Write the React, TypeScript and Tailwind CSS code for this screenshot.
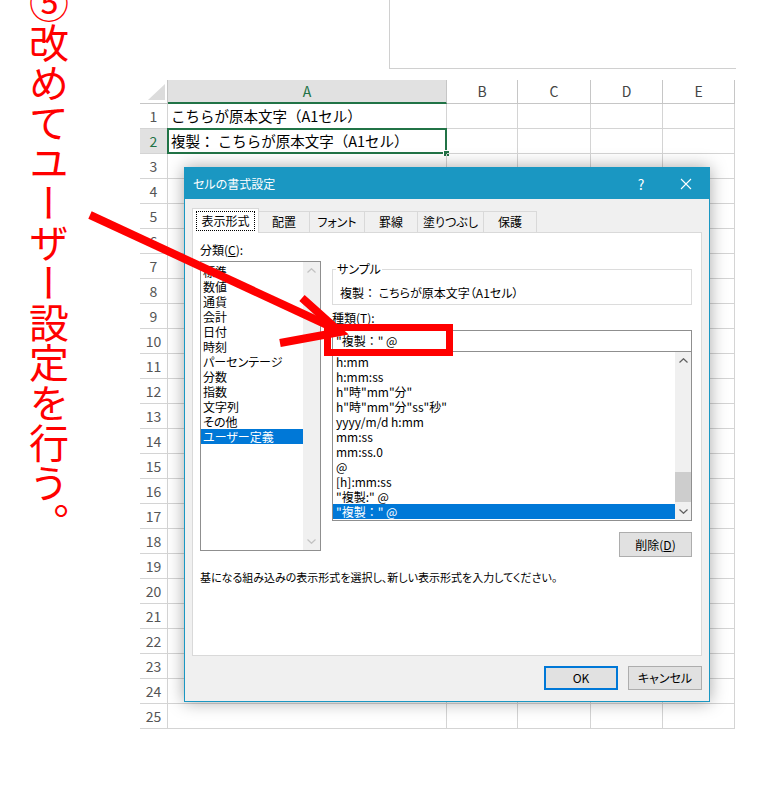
import React from 'react';

const jp = "font-['Noto_Sans_CJK_JP',sans-serif]";

const cols = [
  { label: 'A', w: 'w-[279px]' },
  { label: 'B', w: 'w-[71px]' },
  { label: 'C', w: 'w-[73px]' },
  { label: 'D', w: 'w-[72px]' },
  { label: 'E', w: 'w-[72px]' },
];

const categories = [
  '標準',
  '数値',
  '通貨',
  '会計',
  '日付',
  '時刻',
  'パーセンテージ',
  '分数',
  '指数',
  '文字列',
  'その他',
  'ユーザー定義',
];

const formats = [
  'h:mm',
  'h:mm:ss',
  'h"時"mm"分"',
  'h"時"mm"分"ss"秒"',
  'yyyy/m/d h:mm',
  'mm:ss',
  'mm:ss.0',
  '@',
  '[h]:mm:ss',
  '"複製:" @',
  '"複製：" @',
];

const tabs = [
  { label: '配置', w: 'w-[51px]' },
  { label: 'フォント', w: 'w-[55px]' },
  { label: '罫線', w: 'w-[53px]' },
  { label: '塗りつぶし', w: 'w-[66px]' },
  { label: '保護', w: 'w-[53px]' },
];

function Chevron({ up, color }: { up?: boolean; color: string }) {
  return (
    <svg width="9" height="5" viewBox="0 0 9 5" className="block">
      <polyline
        points={up ? '0.5,4.5 4.5,0.7 8.5,4.5' : '0.5,0.5 4.5,4.3 8.5,0.5'}
        fill="none"
        stroke={color}
        strokeWidth="1.2"
      />
    </svg>
  );
}

function Sheet() {
  return (
    <div className={`ml-[140px] mt-[11px] ${jp}`}>
      {/* column headers */}
      <div className="flex h-[24px]">
        <div className="w-[28px] border-r border-b border-[#c6c6c6] flex items-end justify-end pr-[2px] pb-[3px]">
          <svg width="17" height="16" viewBox="0 0 17 16">
            <polygon points="17,0 17,16 0,16" fill="#dcdcdc" />
          </svg>
        </div>
        {cols.map((c) =>
          c.label === 'A' ? (
            <div
              key={c.label}
              className={`${c.w} bg-[#e1e1e1] border-r border-[#c6c6c6] border-b-2 border-b-[#217346] flex items-center justify-center text-[14px] text-[#217346]`}
            >
              {c.label}
            </div>
          ) : (
            <div
              key={c.label}
              className={`${c.w} border-r border-b border-[#c6c6c6] flex items-center justify-center text-[14px] text-[#444]`}
            >
              {c.label}
            </div>
          )
        )}
      </div>

      {Array.from({ length: 25 }, (_, i) => i + 1).map((n) => (
        <div key={n} className="flex h-[25px]">
          <div
            className={`w-[28px] border-r border-b border-[#d4d4d4] flex items-center justify-center text-[14px] ${
              n === 2 ? 'bg-[#e1e1e1] text-[#217346] border-r-[#217346]' : 'text-[#555]'
            }`}
          >
            {n}
          </div>
          {cols.map((c) => (
            <div
              key={c.label}
              className={`${c.w} relative border-r border-b border-[#d4d4d4] flex items-center pl-[3px] text-[14.5px] text-black whitespace-nowrap`}
            >
              {c.label === 'A' && n === 1 && 'こちらが原本文字（A1セル）'}
              {c.label === 'A' && n === 2 && (
                <>
                  複製： こちらが原本文字（A1セル）
                  <div className="absolute -left-px -top-px -right-px -bottom-px border-2 border-[#217346]" />
                  <div className="absolute -right-[4px] -bottom-[4px] w-[7px] h-[7px] bg-[#217346] border border-white" />
                </>
              )}
            </div>
          ))}
        </div>
      ))}
    </div>
  );
}

function Dialog() {
  return (
    <div
      className={`absolute left-[184px] top-[167px] w-[526px] h-[535px] border border-[#1a97c2] bg-[#f0f0f0] shadow-[0_0_16px_rgba(0,0,0,0.35)] flex flex-col ${jp} [font-feature-settings:'palt'] text-[12px] text-black`}
    >
      {/* title bar */}
      <div className="h-[31px] bg-[#1a97c2] flex items-center pl-[8px] text-white">
        <span className="flex-1 leading-none">セルの書式設定</span>
        <span className="w-[44px] text-center text-[14px] leading-none">?</span>
        <span className="w-[46px] flex justify-center">
          <svg width="12" height="12" viewBox="0 0 12 12">
            <path d="M1 1L11 11M11 1L1 11" stroke="white" strokeWidth="1.1" />
          </svg>
        </span>
      </div>

      <div className="flex-1 flex flex-col px-[7px] pt-[9px]">
        {/* tabs */}
        <div className="flex items-end h-[24px]">
          <div className="relative z-10 -mb-px h-[25px] w-[67px] flex px-[3px] pt-[2px] pb-[2px] bg-white border border-b-0 border-[#d9d9d9]">
            <span className="flex-1 flex items-center justify-center border border-dotted border-black">表示形式</span>
          </div>
          {tabs.map((t) => (
            <div
              key={t.label}
              className={`${t.w} h-[21px] flex items-center justify-center border-t border-r border-[#d9d9d9] bg-[#f0f0f0]`}
            >
              {t.label}
            </div>
          ))}
        </div>

        {/* panel */}
        <div className="h-[424px] bg-white border border-[#d9d9d9] px-[7px] pt-[9px] flex flex-col">
          <div className="flex">
            {/* category */}
            <div className="w-[121px] flex flex-col">
              <div className="h-[16px] leading-[16px]">
                分類(<span className="underline">C</span>):
              </div>
              <div className="mt-[3px] h-[290px] border border-[#8f8f8f] flex">
                <div className="flex-1 pt-[2px]">
                  {categories.map((c) => (
                    <div
                      key={c}
                      className={`h-[15px] leading-[15px] pl-[2px] whitespace-nowrap ${
                        c === 'ユーザー定義' ? 'bg-[#0078d7] text-white' : ''
                      }`}
                    >
                      {c}
                    </div>
                  ))}
                </div>
                <div className="w-[17px] bg-[#f0f0f0] flex flex-col justify-between items-center py-[6px]">
                  <Chevron up color="#c2c2c2" />
                  <Chevron color="#c2c2c2" />
                </div>
              </div>
            </div>

            {/* type */}
            <div className="ml-[11px] w-[360px] flex flex-col pt-[20px]">
              <div className="mt-[7px] h-[36px] border border-[#dcdcdc] pl-[2px]">
                <div className="-mt-[8px] ml-px px-px w-fit bg-white leading-[14px]">サンプル</div>
                <div className="ml-[5px] mt-[10px] leading-[14px] whitespace-nowrap">
                  複製<span className="[font-feature-settings:normal]">：</span> こちらが原本文字（A1セル）
                </div>
              </div>
              <div className="mt-[6px] leading-[14px]">種類(T):</div>
              <div className="mt-[5px] h-[22px] border border-[#8f8f8f] flex items-center pl-[3px] [font-feature-settings:normal]">
                "複製：" @
              </div>
              <div className="h-[169px] border-x border-b border-[#8f8f8f] flex [font-feature-settings:normal]">
                <div className="flex-1 pt-[2px]">
                  {formats.map((f, i) => (
                    <div
                      key={f}
                      className={`h-[15px] leading-[15px] pl-[3px] whitespace-nowrap ${
                        i === formats.length - 1 ? 'bg-[#0078d7] text-white' : ''
                      }`}
                    >
                      {f}
                    </div>
                  ))}
                </div>
                <div className="w-[16px] bg-[#f0f0f0] flex flex-col">
                  <div className="h-[17px] flex items-center justify-center">
                    <Chevron up color="#606060" />
                  </div>
                  <div className="flex-1 pt-[103px]">
                    <div className="h-[30px] bg-[#cdcdcd]" />
                  </div>
                  <div className="h-[17px] flex items-center justify-center">
                    <Chevron color="#606060" />
                  </div>
                </div>
              </div>
              <div className="self-end mt-[11px] w-[73px] h-[25px] border border-[#adadad] bg-[#e1e1e1] flex items-center justify-center">
                削除(<span className="underline">D</span>)
              </div>
            </div>
          </div>

          <div className="mt-[13px] leading-[14px] text-[11px] whitespace-nowrap">
            基になる組み込みの表示形式を選択し、新しい表示形式を入力してください。
          </div>
        </div>

        {/* buttons */}
        <div className="mt-[10px] flex justify-end gap-[10px]">
          <div className="w-[74px] h-[24px] border-2 border-[#0078d7] bg-[#e1e1e1] flex items-center justify-center">
            OK
          </div>
          <div className="w-[74px] h-[24px] border border-[#adadad] bg-[#e1e1e1] flex items-center justify-center">
            キャンセル
          </div>
        </div>
      </div>
    </div>
  );
}

export default function App() {
  return (
    <div className="relative w-[757px] h-[805px] bg-white overflow-hidden">
      {/* box at top right */}
      <div className="ml-[389px] w-[347px] h-[69px] border-l border-b border-[#d0d0d0]" />

      <Sheet />

      <Dialog />

      {/* annotation: vertical caption */}
      <div
        className={`absolute left-[29px] top-[-17px] [writing-mode:vertical-rl] text-[40px] leading-[40px] text-[#ff0000] ${jp}`}
      >
        ⑤改めてユーザー設定を行う。
      </div>

      {/* annotation: arrow and highlight */}
      <svg className="absolute left-0 top-0 pointer-events-none" width="757" height="805" viewBox="0 0 757 805">
        <line x1="90" y1="215" x2="338" y2="330" stroke="#ff0000" strokeWidth="8" />
        <polyline points="302,298 340,332 280,343" fill="none" stroke="#ff0000" strokeWidth="8" strokeLinejoin="miter" />
        <rect x="327.5" y="327.5" width="122" height="25" fill="none" stroke="#ff0000" strokeWidth="7" />
      </svg>
    </div>
  );
}
